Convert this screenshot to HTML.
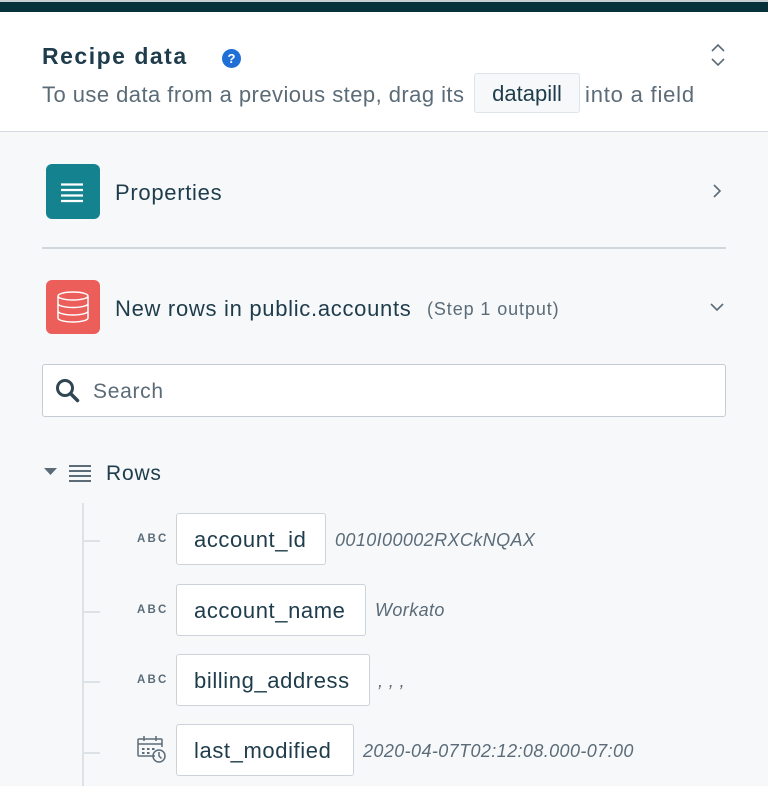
<!DOCTYPE html>
<html><head><meta charset="utf-8"><style>
*{margin:0;padding:0;box-sizing:border-box}
body{width:768px;height:786px;overflow:hidden;background:#f7f8fa;font-family:"Liberation Sans",sans-serif;color:#1e3c4b;position:relative}
.a{position:absolute;white-space:nowrap}
.pill{position:absolute;background:#fff;border:1.5px solid #cdd3d9;border-radius:3px;font-size:22px;color:#1e3c4b;padding-left:17px;line-height:52px;height:52px;letter-spacing:0.6px}
.abc{position:absolute;left:137px;font-size:11.5px;font-weight:bold;letter-spacing:2.2px;color:#5b6c78}
.val{position:absolute;font-size:18px;font-style:italic;color:#5b6c78;letter-spacing:0.4px}
.tick{position:absolute;left:83px;width:17px;height:1.5px;background:#dde2e6}
</style></head><body>
<div class="a" style="left:0;top:0;width:768px;height:2px;background:#c9cfd3"></div>
<div class="a" style="left:0;top:2px;width:768px;height:10px;background:#06303a"></div>
<div class="a" style="left:0;top:12px;width:768px;height:120px;background:#fff;border-bottom:1.5px solid #d3d9de"></div>
<div class="a" style="left:42px;top:43px;font-size:23px;font-weight:bold;color:#1e3c4b;letter-spacing:1.5px">Recipe data</div>
<div class="a" style="left:222px;top:49px;width:19px;height:19px;border-radius:50%;background:#1f6fd6;color:#fff;font-size:13px;font-weight:bold;text-align:center;line-height:19px">?</div>
<svg class="a" style="left:708px;top:42px" width="20" height="26" viewBox="0 0 20 26"><path d="M4 9l6-6 6 6M4 17l6 6 6-6" fill="none" stroke="#5b6c78" stroke-width="1.6"/></svg>
<div class="a" style="left:42px;top:82px;font-size:22px;color:#5b6c78;letter-spacing:0.45px">To use data from a previous step, drag its</div>
<div class="a" style="left:474px;top:73px;width:106px;height:40px;background:#f7f8fa;border:1.5px solid #dfe4e8;border-radius:3px;font-size:22px;color:#1e3c4b;text-align:center;line-height:39px">datapill</div>
<div class="a" style="left:585px;top:82px;font-size:22px;color:#5b6c78;letter-spacing:0.8px">into a field</div>

<div class="a" style="left:46px;top:164px;width:54px;height:55px;border-radius:6px;background:#14828f"></div>
<svg class="a" style="left:46px;top:164px" width="54" height="55"><g stroke="#fff" stroke-width="2.2"><path d="M15 20.5h22M15 26h22M15 31.5h22M15 37h22"/></g></svg>
<div class="a" style="left:115px;top:180px;font-size:22px;letter-spacing:0.7px">Properties</div>
<svg class="a" style="left:710px;top:182px" width="14" height="18"><path d="M4 3l6 6-6 6" fill="none" stroke="#5b6c78" stroke-width="1.6"/></svg>
<div class="a" style="left:42px;top:247px;width:684px;height:2px;background:#cfd6dc"></div>

<div class="a" style="left:46px;top:280px;width:54px;height:54px;border-radius:6px;background:#eb5e5a"></div>
<svg class="a" style="left:46px;top:280px" width="54" height="54"><g fill="none" stroke="#fff" stroke-width="1.5"><ellipse cx="27" cy="16" rx="15" ry="4"/><path d="M12 16v22c0 2.2 6.7 4 15 4s15-1.8 15-4V16M12 23.5c0 2.2 6.7 4 15 4s15-1.8 15-4M12 31c0 2.2 6.7 4 15 4s15-1.8 15-4"/></g></svg>
<div class="a" style="left:115px;top:296px;font-size:22px;letter-spacing:0.7px">New rows in public.accounts</div>
<div class="a" style="left:427px;top:299px;font-size:18px;color:#5b6c78;letter-spacing:0.9px">(Step 1 output)</div>
<svg class="a" style="left:708px;top:300px" width="18" height="14"><path d="M3 4l6 6 6-6" fill="none" stroke="#5b6c78" stroke-width="1.6"/></svg>

<div class="a" style="left:42px;top:364px;width:684px;height:53px;background:#fff;border:1.5px solid #c5ccd3;border-radius:3px"></div>
<svg class="a" style="left:55px;top:378px" width="28" height="28"><circle cx="10" cy="10" r="7.5" fill="none" stroke="#2f4653" stroke-width="3"/><path d="M15.5 15.5l7 7" stroke="#2f4653" stroke-width="3.5" stroke-linecap="round"/></svg>
<div class="a" style="left:93px;top:380px;font-size:21px;color:#5b6c78;letter-spacing:0.7px">Search</div>

<svg class="a" style="left:43px;top:466px" width="16" height="12"><path d="M1 2h13l-6.5 7z" fill="#5b6c78"/></svg>
<svg class="a" style="left:68px;top:463px" width="24" height="22"><g stroke="#5b6c78" stroke-width="2"><path d="M1 3h22M1 8h22M1 13h22M1 18h22"/></g></svg>
<div class="a" style="left:106px;top:462px;font-size:21px;letter-spacing:0.8px">Rows</div>

<div class="a" style="left:82px;top:503px;width:2px;height:283px;background:#dde2e6"></div>
<div class="tick" style="top:540px"></div>
<div class="tick" style="top:611px"></div>
<div class="tick" style="top:681px"></div>
<div class="tick" style="top:752px"></div>

<div class="abc" style="top:533px">ABC</div>
<div class="pill" style="left:176px;top:513px;width:150px">account_id</div>
<div class="val" style="left:335px;top:530px">0010I00002RXCkNQAX</div>

<div class="abc" style="top:604px">ABC</div>
<div class="pill" style="left:176px;top:584px;width:190px">account_name</div>
<div class="val" style="left:375px;top:600px">Workato</div>

<div class="abc" style="top:674px">ABC</div>
<div class="pill" style="left:176px;top:654px;width:194px">billing_address</div>
<div class="val" style="left:378px;top:671px">, , ,</div>

<svg class="a" style="left:136px;top:734px" width="32" height="32" viewBox="0 0 32 32"><g fill="none" stroke="#5b6c78" stroke-width="1.5"><path d="M19 22H3a1 1 0 0 1-1-1V6a1 1 0 0 1 1-1h22a1 1 0 0 1 1 1v7M2 10h24M8 2v5M20 2v5"/><circle cx="23" cy="22" r="6"/><path d="M23 18v4l2.5 2.5"/></g><g fill="#5b6c78"><rect x="6" y="14" width="2.5" height="2"/><rect x="11" y="14" width="2.5" height="2"/><rect x="16" y="14" width="2.5" height="2"/><rect x="6" y="18" width="2.5" height="2"/><rect x="11" y="18" width="2.5" height="2"/></g></svg>
<div class="pill" style="left:176px;top:724px;width:178px">last_modified</div>
<div class="val" style="left:363px;top:741px">2020-04-07T02:12:08.000-07:00</div>
</body></html>
